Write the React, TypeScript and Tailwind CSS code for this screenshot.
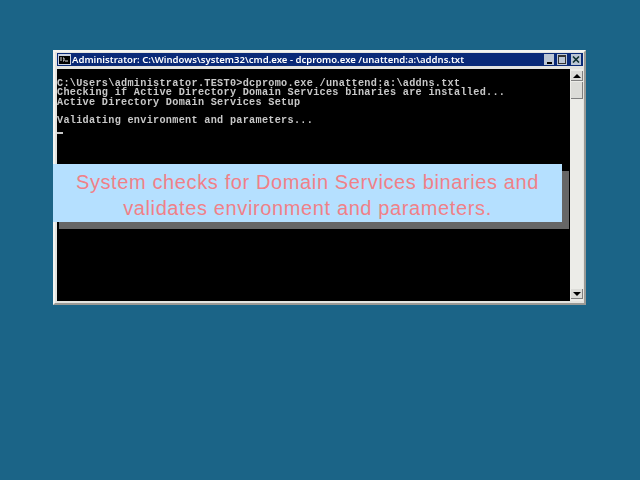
export default function App() {
  const lines = [
    "C:\\Users\\administrator.TEST0>dcpromo.exe /unattend:a:\\addns.txt",
    "Checking if Active Directory Domain Services binaries are installed...",
    "Active Directory Domain Services Setup",
    "\u00a0",
    "Validating environment and parameters...",
  ];
  return (
    <div className="relative w-[640px] h-[480px] overflow-hidden bg-[#1b6487] pt-[50px] pl-[53px]">
      <div className="w-[533px] h-[255px] bg-[#e4e4e0] border-2 border-t-[#f4f4f0] border-l-[#f4f4f0] border-r-[#9a9a96] border-b-[#9a9a96] pt-[1px] pl-[2px] pr-[1px] pb-[2px] flex flex-col">
        <div className="h-[13px] shrink-0 bg-[#0a2a78] flex items-center pl-[1px] pr-[2px]">
          <svg width="13" height="11" viewBox="0 0 13 11" className="shrink-0">
            <rect x="0" y="0" width="13" height="11" fill="#c8d0e0" />
            <rect x="1" y="2" width="11" height="8" fill="#000" />
            <path d="M2 4h2M2 6h2M5 4h1v3H5M7 7h3" stroke="#ddd" strokeWidth="1" fill="none" />
          </svg>
          <span className="ml-[1px] pt-[1px] font-['Noto_Sans',sans-serif] font-semibold text-[9.55px] leading-[12px] text-white whitespace-nowrap flex-1 blur-[0.25px]">
            Administrator: C:\Windows\system32\cmd.exe - dcpromo.exe /unattend:a:\addns.txt
          </span>
          <div className="flex items-center gap-[3px]">
            <div className="w-[10px] h-[11px] bg-[#bcc6d4] flex items-end justify-center pb-[1px]">
              <div className="w-[5px] h-[2px] bg-black" />
            </div>
            <div className="w-[10px] h-[11px] bg-[#bcc6d4] flex items-center justify-center">
              <div className="w-[8px] h-[9px] border border-[#333] border-t-2" />
            </div>
            <div className="w-[10px] h-[11px] ml-[1px] bg-[#bcc6d4] flex items-center justify-center">
              <svg width="8" height="7" viewBox="0 0 8 7">
                <path d="M1 0.5L7 6.5M7 0.5L1 6.5" stroke="#103030" strokeWidth="1.6" />
              </svg>
            </div>
          </div>
        </div>
        <div className="flex flex-1 mt-[3px] min-h-0">
          <div className="flex-1 bg-black pt-[10px] font-['Liberation_Mono',monospace] font-bold text-[10.2px] tracking-[0.29px] leading-[9.3px] text-[#c8c8c8] whitespace-pre blur-[0.25px]">
            {lines.map((l, i) => (
              <div key={i}>{l}</div>
            ))}
            <div className="mt-[7px] w-[6px] h-[2px] bg-[#c8c8c8]" />
          </div>
          <div className="w-[13px] shrink-0 bg-[#ecece8] flex flex-col justify-between pl-[1px] pt-[2px] pb-[2px]">
            <div className="flex flex-col gap-[1px]">
              <div className="h-[10px] bg-[#dcdcd8] border-b border-r border-[#808080] flex items-center justify-center">
                <div className="w-0 h-0 border-l-[4px] border-r-[4px] border-b-[4px] border-l-transparent border-r-transparent border-b-black" />
              </div>
              <div className="h-[17px] bg-[#dcdcd8] border-b border-r border-[#808080]" />
            </div>
            <div className="h-[10px] bg-[#dcdcd8] border-b border-r border-[#808080] flex items-center justify-center">
              <div className="w-0 h-0 border-l-[4px] border-r-[4px] border-t-[4px] border-l-transparent border-r-transparent border-t-black" />
            </div>
          </div>
        </div>
      </div>
      <div className="absolute left-[59px] top-[171px] w-[510px] h-[58px] bg-[#666666]" />
      <div className="absolute left-[53px] top-[164px] w-[509px] h-[58px] bg-[#b5e0ff] flex items-center justify-center text-center pt-[4px] font-['Liberation_Sans',sans-serif] text-[20px] leading-[26px] tracking-[0.62px] text-[#f08088]">
        <p>
          System checks for Domain Services binaries and
          <br />
          validates environment and parameters.
        </p>
      </div>
    </div>
  );
}
